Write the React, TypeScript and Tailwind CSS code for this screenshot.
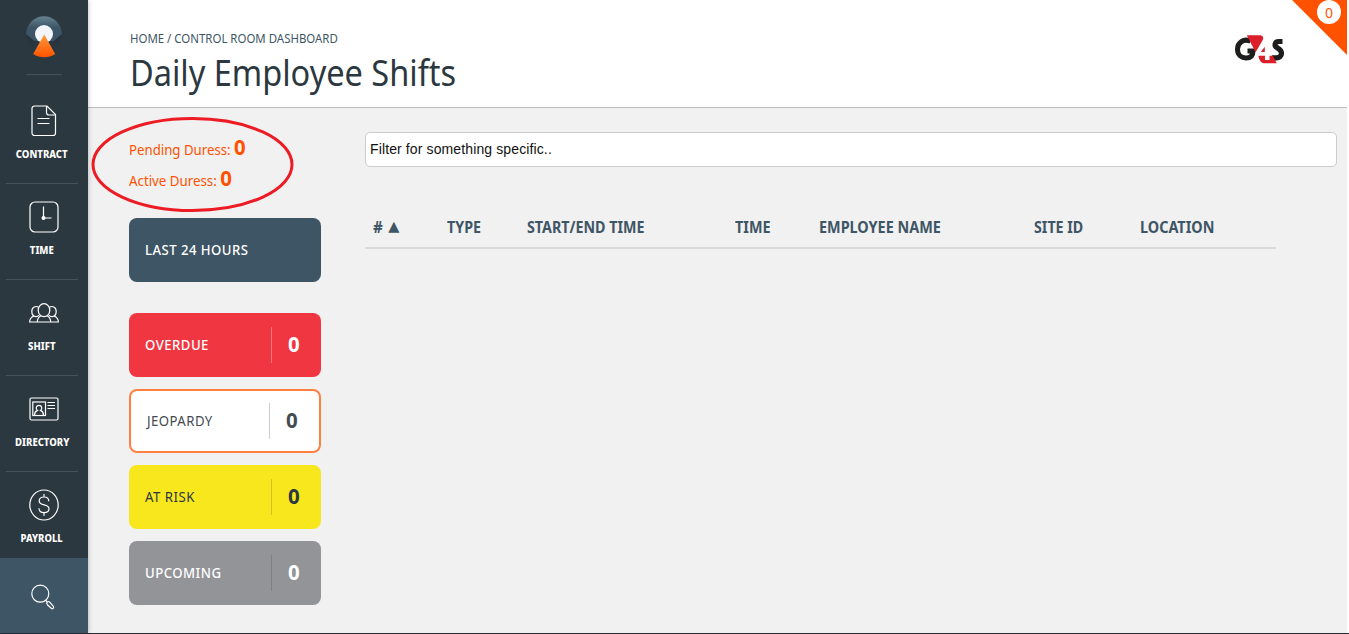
import React from "react";

const NOTO = "font-['Noto_Sans','Open_Sans',sans-serif]";

function FileIcon() {
  return (
    <svg width="26" height="32" viewBox="0 0 26 32" fill="none" stroke="#fff" strokeWidth="1.200">
      <path d="M3.500 1H16l8.500 8.500V28a2.500 2.500 0 0 1-2.500 2.500H3.500A2.500 2.500 0 0 1 1 28V3.500A2.500 2.500 0 0 1 3.500 1Z" />
      <path d="M15.500 1v6.500a2.500 2.500 0 0 0 2.500 2.500h6.500M6.500 13.500h12M6.500 18.500h12" />
    </svg>
  );
}

function ClockIcon() {
  return (
    <svg width="30" height="32" viewBox="0 0 30 32" fill="none" stroke="#fff" strokeWidth="1.200">
      <rect x="1" y="1" width="28" height="30" rx="5" />
      <path d="M14.500 5.500v11.500h8" />
      <circle cx="14.500" cy="17" r="1.400" fill="#fff" />
    </svg>
  );
}

function PeopleIcon() {
  return (
    <svg width="30" height="20" viewBox="0 0 30 20" fill="none" stroke="#fff" strokeWidth="1.200">
      <ellipse cx="15" cy="7.200" rx="5.800" ry="6.500" />
      <path d="M9.500 4.200C7 2.600 2.800 4 2.800 8.400c0 2.400 1.400 4.700 3.800 5.200 1.300.2 2.400-.2 3.400-1.200M20.500 4.200c2.500-1.600 6.700-.2 6.700 4.200 0 2.400-1.400 4.700-3.800 5.200-1.300.2-2.400-.2-3.400-1.200" />
      <path d="M5 13c-2.600 1-4.200 3-4.400 6h28.800c-.2-3-1.800-5-4.400-6M8.300 19c.1-3 1.200-5 3.500-6.200M21.700 19c-.1-3-1.200-5-3.500-6.200" />
    </svg>
  );
}

function CardIcon() {
  return (
    <svg width="30" height="24" viewBox="0 0 30 24" fill="none" stroke="#fff" strokeWidth="1.200">
      <rect x="1" y="1" width="28" height="22" rx="1.500" />
      <rect x="3.800" y="5" width="12.700" height="13.500" />
      <path d="M5.500 18c.2-2.800 1.400-4 3-4.600-2-1.500-1.700-5.100 1.500-5.100s3.500 3.600 1.500 5.100c1.700.6 2.900 1.800 3 4.600M18.500 5.500H26M18.500 8.500H26M18.500 11.500H26" />
    </svg>
  );
}

function DollarIcon() {
  return (
    <svg width="30" height="32" viewBox="0 0 30 32" fill="none" stroke="#fff" strokeWidth="1.200">
      <ellipse cx="15" cy="16" rx="14.200" ry="15" />
      <path d="M15 5v3M15 23.500v3.200M19.800 12.200C19.800 9.500 18 8 15 8s-4.800 1.600-4.800 4c0 5.400 9.800 2.300 9.800 7.600 0 2.500-2 4.100-5 4.100s-5-1.600-5-4.400" />
    </svg>
  );
}

function SearchIcon() {
  return (
    <svg width="24" height="26" viewBox="0 0 24 26" fill="none" stroke="#fff" strokeWidth="1.200">
      <circle cx="9.300" cy="9.700" r="8.500" />
      <path d="m14.800 16.500 1.500 1.700" />
      <path d="M16.200 18.200c.7-.9 1.800-.9 2.500-.1l3.500 4.100c1.200 1.500-.5 3.200-2 2l-3.800-3.500c-.8-.8-.9-1.700-.2-2.500Z" />
    </svg>
  );
}

function BrandMark() {
  return (
    <svg className="shrink-0" width="36" height="42" viewBox="0 0 36 42">
      <defs>
        <linearGradient id="cap" x1="0" y1="0" x2="0" y2="1">
          <stop offset="0" stopColor="#688392" />
          <stop offset=".45" stopColor="#3c5667" />
          <stop offset="1" stopColor="#3c5667" />
        </linearGradient>
        <linearGradient id="beam" x1="0" y1="0" x2="0" y2="1">
          <stop offset="0" stopColor="#ff9b3d" />
          <stop offset="1" stopColor="#ff5200" />
        </linearGradient>
      </defs>
      <circle cx="18" cy="18" r="17.800" fill="#29343c" />
      <path d="M.2 18a17.800 17.800 0 0 1 35.600 0L27.500 25h-19Z" fill="url(#cap)" />
      <path d="M8 25h20v7H8z" fill="#2b3740" />
      <circle cx="18" cy="18" r="9" fill="#f3f5f8" />
      <path d="m18.200 18.500 11 19.500c-6.500 4.300-15.500 4.300-22 0Z" fill="url(#beam)" />
    </svg>
  );
}

function G4SLogo() {
  return (
    <svg width="50" height="30" viewBox="0 0 50 30" aria-label="G4S">
      <path d="M15.500 6.200C8.500 3 2.500 7.800 2.500 14.300c0 6.200 4.500 8.700 8.500 8.700 4.800 0 7-2.700 7-7h-5.500" fill="none" stroke="#1d1d1b" strokeWidth="5" />
      <path d="M47.500 6.500h-3.700c-4.300 0-4.800 4.200-2 6 2.200 1.500 4.700 2.400 4.700 5.700 0 3.400-2.300 4.700-5 4.700h-4.500" fill="none" stroke="#1d1d1b" strokeWidth="5.200" />
      <path d="M11.800.2h12.700c3.600 0 4.400 2.600 3.100 5L20.600 17.200Z" fill="#db202c" />
      <path d="M29.800 11.800v5.300h-4Z" fill="#db202c" />
      <path d="M23.300 20.700H30V25h4.500v-4.300h3.300l4 7.600H29.700c-3.400 0-5.400-2.800-6.400-7.600Z" fill="#db202c" />
    </svg>
  );
}

function NavItem({ icon, label, scale }: { icon: React.ReactNode; label: string; scale: string }) {
  return (
    <div className="flex h-24 w-[72px] flex-col items-center border-b border-[#45525b]">
      <div className="ml-[3px] flex h-[58px] items-center pt-2">{icon}</div>
      <div className={`text-[11px] leading-[15px] font-extrabold whitespace-nowrap text-white ${scale}`}>
        {label}
      </div>
    </div>
  );
}

function Text({ children, fit }: { children: React.ReactNode; fit: string }) {
  return <span className={`inline-block origin-left whitespace-nowrap ${fit}`}>{children}</span>;
}

function StatusButton({ label, box, rule, text, count, fit }: {
  label: string; box: string; rule: string; text: string; count: string; fit: string;
}) {
  return (
    <button className={`flex h-16 w-48 items-center rounded-lg text-left ${box}`}>
      <span className={`flex-1 text-sm tracking-[0.5px] ${text}`}>
        <Text fit={fit}>{label}</Text>
      </span>
      <span className={`flex h-9 w-[50px] items-center border-l pb-0.5 pl-[15.500px] text-[21.500px] font-bold ${rule} ${count}`}>
        <Text fit="scale-x-[0.95]">0</Text>
      </span>
    </button>
  );
}

export default function App() {
  return (
    <div className={`flex h-[634px] w-[1349px] flex-col overflow-hidden bg-white ${NOTO}`}>
      <div className="flex h-[633px]">
        <nav className="z-10 flex w-[88px] shrink-0 flex-col justify-between bg-[#2c3840] shadow-[1px_0_4px_rgba(0,0,0,0.2)]">
          <div className="flex h-[558px] flex-col overflow-hidden pl-1.5">
            <div className="ml-5 flex h-[75px] w-9 shrink-0 flex-col border-b border-[#45525b] pt-[15.500px]">
              <BrandMark />
            </div>
            <div className="mt-[13px]">
              <NavItem icon={<FileIcon />} label="CONTRACT" scale="scale-x-[0.87]" />
              <NavItem icon={<ClockIcon />} label="TIME" scale="scale-x-[0.87]" />
              <NavItem icon={<PeopleIcon />} label="SHIFT" scale="scale-x-[0.87]" />
              <NavItem icon={<CardIcon />} label="DIRECTORY" scale="scale-x-[0.87]" />
              <NavItem icon={<DollarIcon />} label="PAYROLL" scale="scale-x-[0.86]" />
            </div>
          </div>
          <div className="flex h-[75px] items-center justify-center bg-[#3e5565] pt-0.5 pr-[3px]">
            <SearchIcon />
          </div>
        </nav>
        <div className="flex w-[1259px] flex-col bg-[#f1f1f1]">
          <header className="flex h-[108px] justify-between border-b border-[#bcbcbc] bg-white pl-[42px]">
            <div>
              <div className="mt-7 mb-px h-5 text-[13px] leading-5 text-[#3e5565]">
                <Text fit="scale-x-[0.88]">HOME / CONTROL ROOM DASHBOARD</Text>
              </div>
              <h1 className="h-12 text-[36px] leading-12 text-[#2c3840]">
                <Text fit="scale-x-[0.903]">Daily Employee Shifts</Text>
              </h1>
            </div>
            <div className="flex">
              <div className="mt-[35px] mr-[7px]">
                <G4SLogo />
              </div>
              <div className="relative h-[55px] w-[55px]">
                <svg width="55" height="55" viewBox="0 0 55 55">
                  <path d="M0 0h55v55Z" fill="#ff5200" />
                </svg>
                <div className="absolute top-0 left-[25px] flex size-6 items-center justify-center rounded-full bg-white pt-0.5 text-sm text-[#ff5200]">
                  0
                </div>
              </div>
            </div>
          </header>
          <div className="flex">
            <aside className="w-[277px] pl-[41px]">
              <div className="mt-[23px] mb-[25px] text-sm text-[#ff5200]">
                <div className="relative">
                  <svg className="absolute -top-[15px] -left-[39px]" width="206" height="98" viewBox="0 0 206 98">
                    <ellipse cx="102.500" cy="48.500" rx="99.500" ry="46" fill="none" stroke="#ed1c24" strokeWidth="3" />
                  </svg>
                </div>
                <div className="h-[31px] leading-[31px]">
                  <Text fit="scale-x-[0.945]">Pending Duress: <b className="text-[21.500px]">0</b></Text>
                </div>
                <div className="h-[31px] leading-[31px]">
                  <Text fit="scale-x-[0.95]">Active Duress: <b className="text-[21.500px]">0</b></Text>
                </div>
              </div>
              <button className="flex h-16 w-48 items-center rounded-lg bg-[#3e5565] pl-4 text-sm font-medium tracking-[0.5px] text-white">
                <Text fit="scale-x-[0.937]">LAST 24 HOURS</Text>
              </button>
              <div className="mt-[31px] flex flex-col gap-3">
                <StatusButton label="OVERDUE" box="bg-[#ef3641] pl-4" rule="border-[#f4767d]" text="font-medium text-white" count="text-white" fit="scale-x-[0.94]" />
                <StatusButton label="JEOPARDY" box="border-2 border-[#ff8040] bg-white pl-4" rule="border-[#ccc]" text="text-[#444a4f]" count="text-[#444a4f]" fit="scale-x-[0.94]" />
                <StatusButton label="AT RISK" box="bg-[#f8e71c] pl-4" rule="border-[#d0c22b]" text="text-[#2c3840]" count="text-[#2c3840]" fit="scale-x-[0.945]" />
                <StatusButton label="UPCOMING" box="bg-[#939498] pl-4" rule="border-[#7e7f83]" text="font-medium text-white" count="text-white" fit="scale-x-[0.94]" />
              </div>
            </aside>
            <main className="w-[982px]">
              <input
                className="mt-6 block h-[35px] w-[972px] rounded-[5px] border border-[#ccc] bg-white px-1 pb-0.5 font-['Liberation_Sans',Arial,sans-serif] text-sm tracking-[0.120px] text-[#111] outline-none"
                defaultValue="Filter for something specific.."
              />
              <table className="mt-10 w-[911px] table-fixed border-b-2 border-[#dadada] text-left text-base leading-6 text-[#3e5565]">
                <thead>
                  <tr className="h-[41px] align-top">
                    <th className="w-[73px] pt-2 pl-2 font-bold">
                      <div className="flex h-6 gap-[5px]">
                        <Text fit="scale-x-[0.95]">#</Text>
                        <span className="font-['DejaVu_Sans',sans-serif] text-[14.500px] leading-[23px] font-normal">▲</span>
                      </div>
                    </th>
                    <th className="w-20 pt-2 pl-[8.500px] font-bold"><Text fit="scale-x-[0.89]">TYPE</Text></th>
                    <th className="w-52 pt-2 pl-[8.500px] font-bold"><Text fit="scale-x-[0.892]">START/END TIME</Text></th>
                    <th className="w-[84px] pt-2 pl-[8.500px] font-bold"><Text fit="scale-x-[0.9]">TIME</Text></th>
                    <th className="w-[216px] pt-2 pl-[8.500px] font-bold"><Text fit="scale-x-[0.9]">EMPLOYEE NAME</Text></th>
                    <th className="w-[105px] pt-2 pl-2 font-bold"><Text fit="scale-x-[0.89]">SITE ID</Text></th>
                    <th className="pt-2 pl-[8.500px] font-bold"><Text fit="scale-x-[0.9]">LOCATION</Text></th>
                  </tr>
                </thead>
              </table>
            </main>
          </div>
        </div>
      </div>
      <div className="h-px bg-[#2b2b33]" />
    </div>
  );
}
